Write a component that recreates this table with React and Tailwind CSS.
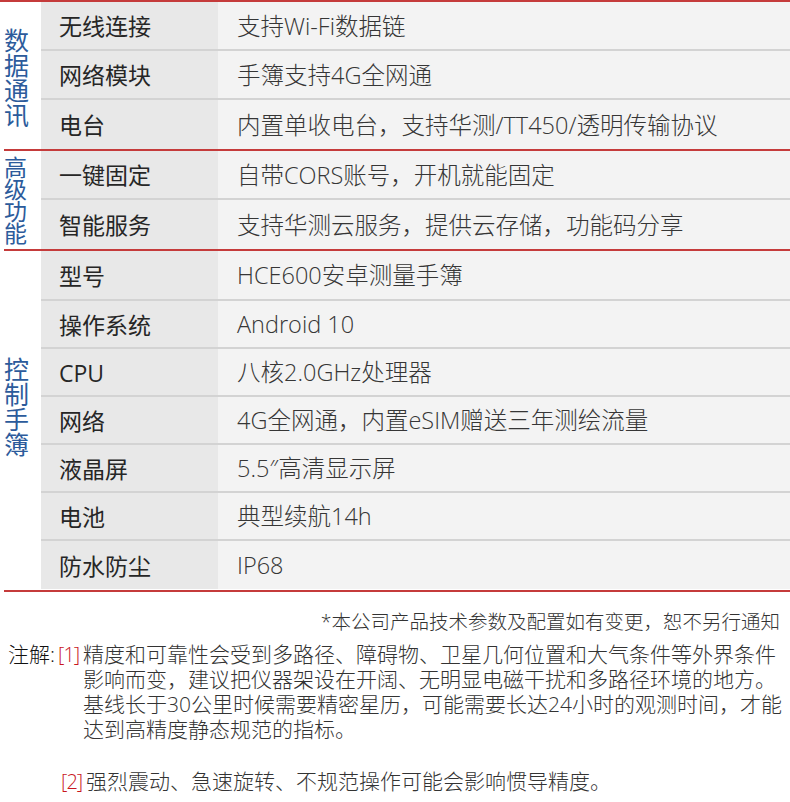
const sections = [
  {
    title: "数据通讯",
    cat: "w-[25px] text-[25px] leading-[25px] mt-[5px]",
    rows: [
      ["无线连接", "支持Wi-Fi数据链"],
      ["网络模块", "手簿支持4G全网通"],
      ["电台", "内置单收电台，支持华测/TT450/透明传输协议"],
    ],
    heights: ["h-[49px]", "h-[49px]", "h-[49px]"],
  },
  {
    title: "高级功能",
    cat: "w-[23px] text-[23px] leading-[22px] mt-0",
    rows: [
      ["一键固定", "自带CORS账号，开机就能固定"],
      ["智能服务", "支持华测云服务，提供云存储，功能码分享"],
    ],
    heights: ["h-[49px]", "h-[49px]"],
  },
  {
    title: "控制手簿",
    cat: "w-[25px] text-[25px] leading-[25px] mb-[26px]",
    rows: [
      ["型号", "HCE600安卓测量手簿"],
      ["操作系统", "Android 10"],
      ["CPU", "八核2.0GHz处理器"],
      ["网络", "4G全网通，内置eSIM赠送三年测绘流量"],
      ["液晶屏", "5.5″高清显示屏"],
      ["电池", "典型续航14h"],
      ["防水防尘", "IP68"],
    ],
    heights: ["h-[50px]", "h-[48px]", "h-[48px]", "h-[48px]", "h-[48px]", "h-[48px]", "h-[48px]"],
  },
];

function Section({ section }) {
  const last = section.rows.length - 1;
  return (
    <div className="flex">
      <div className="w-[41px] shrink-0 flex items-center pl-[4px]">
        <div className={`text-[#2c5b9b] break-all text-center ${section.cat}`}>{section.title}</div>
      </div>
      <div className="flex-1 flex flex-col">
        {section.rows.map(([label, value], i) => (
          <div
            key={label}
            className={`flex ${section.heights[i]} ${i < last ? "border-b-2 border-[#d3d3d3]" : ""}`}
          >
            <div className="w-[177px] shrink-0 bg-[#e8e8e8] pl-[18px] pt-[2px] flex items-center text-[23px] text-[#262626]">
              {label}
            </div>
            <div className="flex-1 bg-[#f3f3f3] pl-[19px] pt-[2px] flex items-center text-[23.5px] font-light text-[#363636]">
              {value}
            </div>
          </div>
        ))}
      </div>
    </div>
  );
}

export default function App() {
  return (
    <div
      className="w-[790px] h-[802px] bg-white overflow-hidden"
      style={{ fontFamily: '"Open Sans", "Noto Sans CJK SC", sans-serif' }}
    >
      <div className="h-[2px] bg-[#c53b3b]" />
      {sections.map((s, i) => (
        <div key={s.title}>
          <Section section={s} />
          <div className={`h-[2px] bg-[#c53b3b] ml-1 ${i === sections.length - 1 ? "mt-[1px]" : ""}`} />
        </div>
      ))}

      <div className="pt-[18px] pr-[10px] text-right text-[19.5px] leading-[24px] font-light text-[#333]">
        *本公司产品技术参数及配置如有变更，恕不另行通知
      </div>

      <div className="mt-[8px] flex pl-[8px] text-[21px] leading-[25px]">
        <span className="w-[50px] shrink-0 font-light text-[#111]">注解:</span>
        <span className="w-[25px] shrink-0 text-[20px] font-light text-[#c8161d] tracking-[-1px]">[1]</span>
        <p className="whitespace-nowrap text-[#333] font-light">
          精度和可靠性会受到多路径、障碍物、卫星几何位置和大气条件等外界条件
          <br />
          影响而变，建议把仪器架设在开阔、无明显电磁干扰和多路径环境的地方。
          <br />
          基线长于30公里时候需要精密星历，可能需要长达24小时的观测时间，才能
          <br />
          达到高精度静态规范的指标。
        </p>
      </div>

      <div className="mt-[27px] flex pl-[61px] text-[21px] leading-[25px]">
        <span className="w-[25px] shrink-0 text-[20px] font-light text-[#c8161d] tracking-[-1px]">[2]</span>
        <span className="whitespace-nowrap text-[#333] font-light">
          强烈震动、急速旋转、不规范操作可能会影响惯导精度。
        </span>
      </div>
    </div>
  );
}
